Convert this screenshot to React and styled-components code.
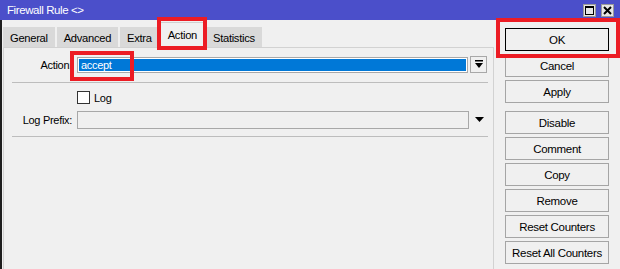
import React from "react";
import styled, { createGlobalStyle } from "styled-components";

const Global = createGlobalStyle`
  html, body { margin: 0; padding: 0; background: #f0f0f0; }
  body { font-family: "Liberation Sans", Arial, sans-serif; font-size: 11px; color: #000; }
  * { box-sizing: border-box; }
`;

const Window = styled.div`
  position: relative;
  width: 620px;
  height: 269px;
  overflow: hidden;
  display: flex;
  flex-direction: column;
  background: #f0f0f0;
  letter-spacing: -0.3px;
`;

const TitleBar = styled.div`
  height: 20px;
  flex: none;
  background: #4b4fca;
  display: flex;
  align-items: center;
  justify-content: space-between;
  padding: 0 6px 0 7px;
`;

const Title = styled.div`
  color: #fff;
  font-size: 11.5px;
  letter-spacing: -0.4px;
`;

const WinButtons = styled.div`
  display: flex;
  gap: 5px;
  margin-top: 1px;
`;

const WinButton = styled.div`
  width: 13px;
  height: 13px;
  background: #e6e6e6;
  border: 1px solid #9a9a9a;
  display: flex;
  align-items: center;
  justify-content: center;
`;

const Body = styled.div`
  flex: 1;
  display: flex;
  border-left: 2px solid #1e1e1e;
`;

const LeftPane = styled.div`
  width: 492px;
  flex: none;
  display: flex;
  flex-direction: column;
  padding-left: 1px;
`;

const TabRow = styled.div`
  height: 27px;
  flex: none;
  display: flex;
  align-items: flex-end;
  gap: 2px;
`;

const Tab = styled.div`
  position: relative;
  height: ${(p) => (p.$active ? "25px" : "20px")};
  margin: ${(p) => (p.$active ? "0 -2px" : "0")};
  padding: ${(p) => (p.$active ? "0 8px" : "0 6px")};
  background: ${(p) => (p.$active ? "#f0f0f0" : "#d9d9d9")};
  border: 1px solid ${(p) => (p.$active ? "#d0d0d0" : "#d9d9d9")};
  border-bottom: none;
  display: flex;
  align-items: center;
  justify-content: center;
  font-size: 11.2px;
  padding-top: ${(p) => (p.$active ? "0" : "1px")};
  z-index: ${(p) => (p.$active ? 1 : 0)};
`;

const Highlight = styled.div`
  position: absolute;
  top: ${(p) => p.$t}px;
  left: ${(p) => p.$l}px;
  right: ${(p) => p.$r}px;
  bottom: ${(p) => p.$b}px;
  border: 4px solid #ec1c24;
  pointer-events: none;
  z-index: 5;
`;

const Panel = styled.div`
  flex: 1;
  border: 1px solid #d2d2d2;
  border-bottom: none;
  padding-top: 9px;
  display: flex;
  flex-direction: column;
`;

const Row = styled.div`
  display: flex;
  align-items: center;
  height: ${(p) => p.$h}px;
  margin-top: ${(p) => p.$mt || 0}px;
`;

const Label = styled.div`
  width: 69px;
  flex: none;
  text-align: right;
  padding-right: 1px;
  margin-right: 4px;
  white-space: nowrap;
`;

const SelectField = styled.div`
  position: relative;
  width: 391px;
  height: 16px;
  border: 1px solid #a8a8a8;
  padding: 1px;
  background: #fff;
`;

const SelectValue = styled.div`
  height: 100%;
  background: #0078d7;
  color: #fff;
  padding-left: 2px;
  line-height: 12px;
`;

const DropButton = styled.div`
  width: 17px;
  height: 17px;
  margin-left: 2px;
  margin-top: -1px;
  border: 1px solid #a8a8a8;
  background: #f0f0f0;
  display: flex;
  align-items: center;
  justify-content: center;
`;

const Separator = styled.div`
  height: 1px;
  background: #bdbdbd;
  margin: ${(p) => p.$m};
`;

const Checkbox = styled.div`
  width: 13px;
  height: 13px;
  border: 1px solid #333;
  background: #fff;
  margin-left: 73px;
  margin-right: 4px;
`;

const TextInput = styled.div`
  width: 392px;
  height: 18px;
  border: 1px solid #a8a8a8;
  background: #f0f0f0;
`;

const Arrow = styled.div`
  margin-left: 6px;
  display: flex;
  align-items: center;
`;

const RightPane = styled.div`
  flex: 1;
  display: flex;
  flex-direction: column;
  gap: 3px;
  padding: 8px 0 0 11px;
`;

const Button = styled.div`
  position: relative;
  width: 104px;
  height: 23px;
  flex: none;
  border: 1px solid ${(p) => (p.$primary ? "#000" : "#a5a5a5")};
  background: #f0f0f0;
  display: flex;
  align-items: center;
  justify-content: center;
  margin-top: ${(p) => (p.$gapBefore ? "5px" : "0")};
  font-size: 11.5px;
`;

const tabs = ["General", "Advanced", "Extra", "Action", "Statistics"];
const buttons = [
  { label: "OK", primary: true },
  { label: "Cancel" },
  { label: "Apply" },
  { label: "Disable", gapBefore: true },
  { label: "Comment" },
  { label: "Copy" },
  { label: "Remove" },
  { label: "Reset Counters" },
  { label: "Reset All Counters" },
];

export default function App() {
  return (
    <>
      <Global />
      <Window>
        <TitleBar>
          <Title>Firewall Rule &lt;&gt;</Title>
          <WinButtons>
            <WinButton>
              <svg width="9" height="9" viewBox="0 0 9 9">
                <rect x="0.5" y="0.5" width="8" height="8" fill="none" stroke="#000" />
                <rect x="0" y="0" width="9" height="2" fill="#000" />
              </svg>
            </WinButton>
            <WinButton>
              <svg width="9" height="9" viewBox="0 0 9 9">
                <path d="M1 1 L8 8 M8 1 L1 8" stroke="#000" strokeWidth="2" />
              </svg>
            </WinButton>
          </WinButtons>
        </TitleBar>
        <Body>
          <LeftPane>
            <TabRow>
              {tabs.map((t) => (
                <Tab key={t} $active={t === "Action"}>
                  {t}
                  {t === "Action" && <Highlight $t={-6} $l={-3} $r={-2} $b={-3} />}
                </Tab>
              ))}
            </TabRow>
            <Panel>
              <Row $h={16}>
                <Label>Action:</Label>
                <SelectField>
                  <SelectValue>accept</SelectValue>
                  <Highlight $t={-7} $l={-8} $r={333} $b={-9} />
                </SelectField>
                <DropButton>
                  <svg width="8" height="9" viewBox="0 0 8 9">
                    <rect x="0" y="0" width="8" height="1.5" fill="#000" />
                    <path d="M0 3 H8 L4 8 Z" fill="#000" />
                  </svg>
                </DropButton>
              </Row>
              <Separator $m="9px 5px 0 8px" />
              <Row $h={13} $mt={8}>
                <Checkbox />
                <span>Log</span>
              </Row>
              <Row $h={18} $mt={7}>
                <Label>Log Prefix:</Label>
                <TextInput />
                <Arrow>
                  <svg width="9" height="6" viewBox="0 0 9 6">
                    <path d="M0 0 H9 L4.5 5 Z" fill="#000" />
                  </svg>
                </Arrow>
              </Row>
              <Separator $m="7px 5px 0 8px" />
            </Panel>
          </LeftPane>
          <RightPane>
            {buttons.map((b) => (
              <Button key={b.label} $primary={b.primary} $gapBefore={b.gapBefore}>
                {b.label}
                {b.primary && <Highlight $t={-11} $l={-10} $r={-12} $b={-8} />}
              </Button>
            ))}
          </RightPane>
        </Body>
      </Window>
    </>
  );
}
